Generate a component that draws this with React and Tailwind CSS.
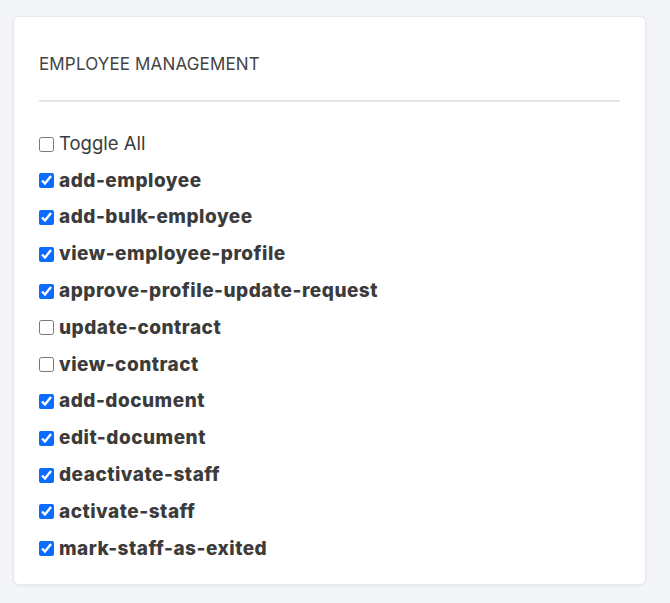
const permissions = [
  { name: "add-employee", checked: true },
  { name: "add-bulk-employee", checked: true },
  { name: "view-employee-profile", checked: true },
  { name: "approve-profile-update-request", checked: true },
  { name: "update-contract", checked: false },
  { name: "view-contract", checked: false },
  { name: "add-document", checked: true },
  { name: "edit-document", checked: true },
  { name: "deactivate-staff", checked: true },
  { name: "activate-staff", checked: true },
  { name: "mark-staff-as-exited", checked: true },
];

export default function App() {
  return (
    <div className="min-h-[603px] bg-[#f4f5f9] px-[13px] pt-[16px] font-['Inter',sans-serif] text-[#3b3b3b]">
      <div className="w-[633px] rounded-md border border-[#e6e8ee] bg-white px-[25px] pb-[23px] pt-[37px] shadow-[0_1px_3px_rgba(0,0,0,0.06)]">
        <h3 className="text-[17px] leading-[20px] tracking-[0.15px] text-[#444]">EMPLOYEE MANAGEMENT</h3>
        <hr className="mt-[26px] border-t-2 border-[#e5e6ea]" />
        <div className="mt-[30px] flex flex-col gap-[12.8px]">
          <label className="flex h-[24px] items-center gap-[5px] text-[18.5px]">
            <input type="checkbox" className="h-[15px] w-[15px] accent-[#0b6cff]" />
            Toggle All
          </label>
          {permissions.map((p) => (
            <label
              key={p.name}
              className="flex h-[24px] items-center gap-[5px] text-[19px] font-extrabold tracking-[0.5px]"
            >
              <input
                type="checkbox"
                defaultChecked={p.checked}
                className="h-[15px] w-[15px] accent-[#0b6cff]"
              />
              {p.name}
            </label>
          ))}
        </div>
      </div>
    </div>
  );
}
